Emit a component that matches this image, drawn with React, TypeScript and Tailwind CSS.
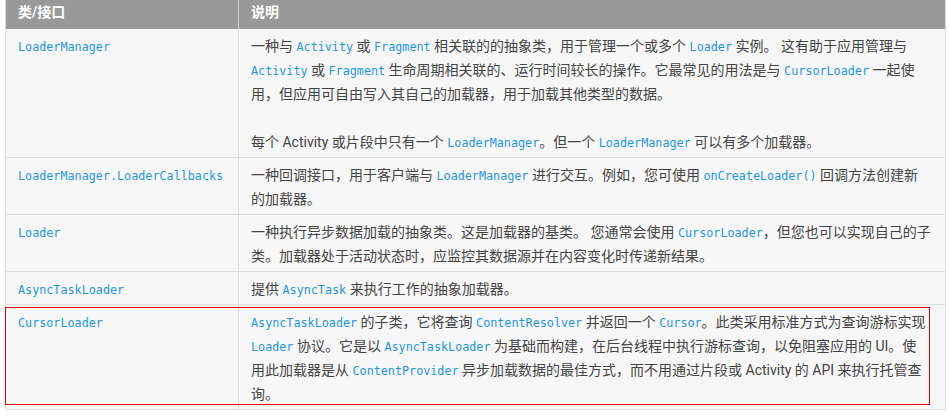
import React from "react";

const C = ({ children }: { children: React.ReactNode }) => (
  <code
    className="text-[#1e96e6] text-[11.75px]"
    style={{ fontFamily: '"DejaVu Sans Mono", "Liberation Mono", monospace' }}
  >
    {children}
  </code>
);

const Line = ({ children }: { children?: React.ReactNode }) => (
  <div className="h-[24px] leading-[24px] whitespace-nowrap">{children}</div>
);

type Row = { name: string; lines: React.ReactNode[] };

const rows: Row[] = [
  {
    name: "LoaderManager",
    lines: [
      <>一种与 <C>Activity</C> 或 <C>Fragment</C> 相关联的的抽象类，用于管理一个或多个 <C>Loader</C> 实例。 这有助于应用管理与</>,
      <><C>Activity</C> 或 <C>Fragment</C> 生命周期相关联的、运行时间较长的操作。它最常见的用法是与 <C>CursorLoader</C> 一起使</>,
      <>用，但应用可自由写入其自己的加载器，用于加载其他类型的数据。</>,
      null,
      <>每个 Activity 或片段中只有一个 <C>LoaderManager</C>。但一个 <C>LoaderManager</C> 可以有多个加载器。</>,
    ],
  },
  {
    name: "LoaderManager.LoaderCallbacks",
    lines: [
      <>一种回调接口，用于客户端与 <C>LoaderManager</C> 进行交互。例如，您可使用 <C>onCreateLoader()</C> 回调方法创建新</>,
      <>的加载器。</>,
    ],
  },
  {
    name: "Loader",
    lines: [
      <>一种执行异步数据加载的抽象类。这是加载器的基类。 您通常会使用 <C>CursorLoader</C>，但您也可以实现自己的子</>,
      <>类。加载器处于活动状态时，应监控其数据源并在内容变化时传递新结果。</>,
    ],
  },
  {
    name: "AsyncTaskLoader",
    lines: [<>提供 <C>AsyncTask</C> 来执行工作的抽象加载器。</>],
  },
  {
    name: "CursorLoader",
    lines: [
      <><C>AsyncTaskLoader</C> 的子类，它将查询 <C>ContentResolver</C> 并返回一个 <C>Cursor</C>。此类采用标准方式为查询游标实现</>,
      <><C>Loader</C> 协议。它是以 <C>AsyncTaskLoader</C> 为基础而构建，在后台线程中执行游标查询，以免阻塞应用的 UI。使</>,
      <>用此加载器是从 <C>ContentProvider</C> 异步加载数据的最佳方式，而不用通过片段或 Activity 的 API 来执行托管查</>,
      <>询。</>,
    ],
  },
];

export default function App() {
  return (
    <div
      className="relative w-[949px] h-[416px] bg-white overflow-hidden text-[#444444] text-[14px]"
      style={{ fontFamily: 'Roboto, "Noto Sans CJK SC", sans-serif' }}
    >
      <div className="ml-[5px] w-[941px] border-l border-r border-[#dddddd]">
        <div className="grid grid-cols-[232px_1fr] h-[29px] bg-[#999999] text-white font-bold text-[14px]">
          <div className="pl-[12px] leading-[25px]">类/接口</div>
          <div className="pl-[12px] leading-[25px] border-l border-[#cccccc]">说明</div>
        </div>
        {rows.map((r) => (
          <div key={r.name} className="grid grid-cols-[232px_1fr] bg-[#f7f7f7] border-b border-[#dddddd]">
            <div className="pl-[12px] pt-[5px] pb-[3px]">
              <Line>
                <C>{r.name}</C>
              </Line>
            </div>
            <div className="pl-[12px] pt-[5px] pb-[3px] border-l border-[#dddddd]">
              {r.lines.map((l, i) => (
                <Line key={i}>{l}</Line>
              ))}
            </div>
          </div>
        ))}
      </div>
      <div className="absolute left-[5px] top-[307px] w-[925px] h-[98px] border border-[#ee0000]" />
    </div>
  );
}
